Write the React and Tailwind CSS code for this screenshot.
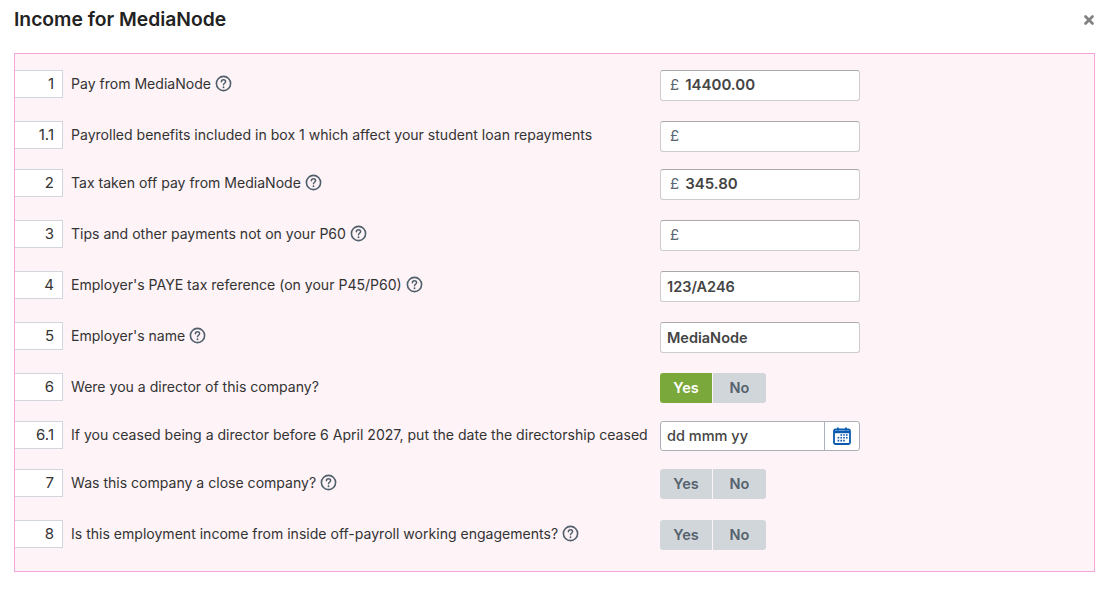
import React from 'react'
import { X } from 'lucide-react'

const font = { fontFamily: 'Inter, sans-serif' }

const HelpIcon = () => (
  <svg width="17" height="17" viewBox="0 0 17 17" fill="none" className="ml-[4px] shrink-0">
    <circle cx="8.5" cy="8.5" r="7.1" stroke="#4f5f6b" strokeWidth="1.6" />
    <path d="M6.4 6.7c0-1.2.9-2 2.1-2s2.1.8 2.1 1.9c0 1.7-2.1 1.6-2.1 3.2" stroke="#4f5f6b" strokeWidth="1.5" strokeLinecap="round" />
    <circle cx="8.5" cy="12.2" r="0.95" fill="#4f5f6b" />
  </svg>
)

const CalendarIcon = () => (
  <svg width="18" height="18" viewBox="0 0 18 18" fill="none">
    <rect x="1" y="2.5" width="16" height="14.5" rx="1.5" stroke="#0a5ab0" strokeWidth="1.8" />
    <path d="M1 5h16" stroke="#0a5ab0" strokeWidth="2.4" />
    <path d="M5 0.6v3M13 0.6v3" stroke="#0a5ab0" strokeWidth="1.8" />
    <path d="M7.4 8h1.6M10.2 8h1.6M13 8h1.6M4.6 10.8h1.6M7.4 10.8h1.6M10.2 10.8h1.6M13 10.8h1.6M4.6 13.6h1.6M7.4 13.6h1.6M10.2 13.6h1.6" stroke="#0a5ab0" strokeWidth="1.6" />
  </svg>
)

const Row = ({ num, label, help, gap, children }) => (
  <div className={`flex items-start ${gap}`}>
    <div className="w-[48px] h-[28px] shrink-0 bg-white border border-l-0 border-[#d0d6dc] flex items-center justify-end pr-[8px] text-[15px] text-[#333]">
      {num}
    </div>
    <div className="w-[589px] shrink-0 ml-[8px] flex items-center h-[27px] text-[14.05px] text-[#333] whitespace-nowrap">
      {label}
      {help && <HelpIcon />}
    </div>
    {children}
  </div>
)

const MoneyInput = ({ value }) => (
  <div className="w-[200px] h-[31px] bg-white rounded-[3px] border border-[#ccc] border-t-[#aaa] flex items-center pl-[9px] text-[15px]">
    <span className="text-[#5a6670] mr-[6px]">£</span>
    <span className="font-semibold text-[#444]">{value}</span>
  </div>
)

const TextInput = ({ value }) => (
  <div className="w-[200px] h-[31px] bg-white rounded-[3px] border border-[#ccc] border-t-[#aaa] flex items-center pl-[6px] text-[14.5px] font-semibold text-[#444]">
    {value}
  </div>
)

const Toggle = ({ yes }) => (
  <div className="flex h-[30px] text-[14.5px] font-semibold">
    <div className={`w-[52px] rounded-l-[3px] flex items-center justify-center ${yes ? 'bg-[#7aa83b] text-white' : 'bg-[#d1d6da] text-[#55626d]'}`}>Yes</div>
    <div className="w-[53px] ml-px rounded-r-[3px] bg-[#d1d6da] text-[#55626d] flex items-center justify-center">No</div>
  </div>
)

const DateInput = () => (
  <div className="w-[200px] h-[30px] bg-white rounded-[3px] border border-[#aab1b8] flex items-center text-[14.5px] font-medium text-[#444]">
    <span className="flex-1 pl-[6px]">dd mmm yy</span>
    <span className="w-[35px] h-full border-l border-[#aab1b8] flex items-center justify-center">
      <CalendarIcon />
    </span>
  </div>
)

export default function App() {
  return (
    <div className="w-[1116px] h-[593px] bg-white overflow-hidden" style={font}>
      <div className="flex items-center justify-between h-[39px] pl-[14px] pr-[20px]">
        <h1 className="text-[19.3px] font-semibold text-[#222]">Income for MediaNode</h1>
        <X size={14} strokeWidth={4.5} className="text-[#808080]" />
      </div>
      <div className="mt-[14px] ml-[14px] w-[1081px] h-[519px] bg-[#fef3f7] border border-[#f4a6dc] pt-[16px]">
        <Row num="1" label="Pay from MediaNode" help gap="mb-[20px]"><MoneyInput value="14400.00" /></Row>
        <Row num="1.1" label="Payrolled benefits included in box 1 which affect your student loan repayments" gap="mb-[17px]"><MoneyInput /></Row>
        <Row num="2" label="Tax taken off pay from MediaNode" help gap="mb-[20px]"><MoneyInput value="345.80" /></Row>
        <Row num="3" label="Tips and other payments not on your P60" help gap="mb-[20px]"><MoneyInput /></Row>
        <Row num="4" label="Employer's PAYE tax reference (on your P45/P60)" help gap="mb-[20px]"><TextInput value="123/A246" /></Row>
        <Row num="5" label="Employer's name" help gap="mb-[20px]"><TextInput value="MediaNode" /></Row>
        <Row num="6" label="Were you a director of this company?" gap="mb-[18px]"><Toggle yes /></Row>
        <Row num="6.1" label="If you ceased being a director before 6 April 2027, put the date the directorship ceased" gap="mb-[18px]"><DateInput /></Row>
        <Row num="7" label="Was this company a close company?" help gap="mb-[21px]"><Toggle /></Row>
        <Row num="8" label="Is this employment income from inside off-payroll working engagements?" help gap="mb-0"><Toggle /></Row>
      </div>
    </div>
  )
}
